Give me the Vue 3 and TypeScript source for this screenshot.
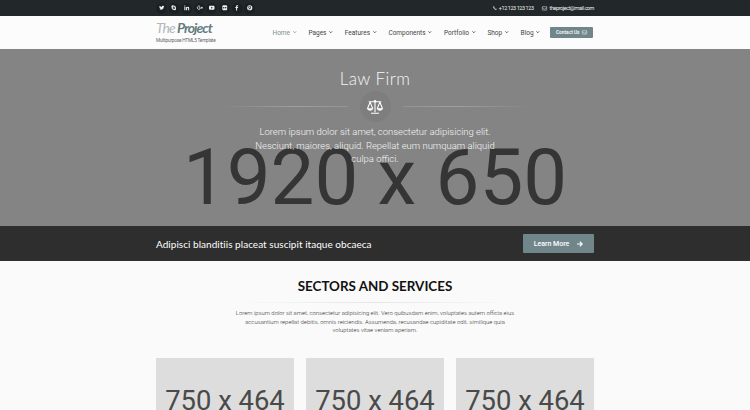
<script setup lang="ts">
interface MenuItem {
  label: string
  key: string
}

const menu: MenuItem[] = [
  { label: 'Home', key: 'home' },
  { label: 'Pages', key: 'pages' },
  { label: 'Features', key: 'features' },
  { label: 'Components', key: 'components' },
  { label: 'Portfolio', key: 'portfolio' },
  { label: 'Shop', key: 'shop' },
  { label: 'Blog', key: 'blog' },
]

const socials: string[] = ['twitter', 'skype', 'linkedin', 'google', 'youtube', 'flickr', 'facebook', 'pinterest']
const cards: number[] = [1, 2, 3]
</script>

<template>
  <div class="page">
    <div class="topbar">
      <div class="container topbar-row">
        <ul class="socials">
          <li v-for="name in socials" :key="name">
            <svg viewBox="0 0 16 16" fill="currentColor">
              <path v-if="name === 'twitter'" d="M15.5 3.4l-1.6.5 1.2-1.6-2 .8c-2.2-2-5.400-.3-5 2.600C5.500 5.600 3.300 4.400 1.500 2.300c-.9 1.700-.5 3.300.9 4.300L1 6.200c0 1.500 1 2.700 2.500 3.100H2c.4 1.300 1.600 2.100 3 2.200-1.300 1-2.900 1.400-4.500 1.200 6.200 3.500 13.400.3 13.400-7.500z" />
              <path v-else-if="name === 'skype'" fill-rule="evenodd" d="M4.500 1c1 0 1.700.3 2.300.7C11 1 15 4.800 14.300 9.200c2 3.500-2 7.300-5.200 5.200C4.700 15 1 11.200 1.700 6.800.2 4 1.700 1 4.500 1zM11 6.200C10.500 3.400 5 3.300 5 6.400c0 2.700 4.300 1.900 4.300 3.500 0 1.200-2.400 1-2.800-.4H4.700c.3 3.400 6.700 3.400 6.700.1 0-3-4.400-2.300-4.400-3.500 0-.9 1.900-.8 2.200.1z" />
              <path v-else-if="name === 'linkedin'" d="M1 5.500h3V15H1zM1 1.500h3v2.700H1zM6 5.500h3v1.300c1.700-2.400 6-1.900 6 2.200v6h-3V9.700c0-2.500-3-2.300-3 0V15H6z" />
              <g v-else-if="name === 'google'" fill="none" stroke="currentColor" stroke-width="2.300">
                <path d="M9 4.500C6 1.300 1 3.500 1 8s5.500 6.500 8 3c.6-.9.8-1.700.8-2.800H5.500M11.500 8H17M14.200 5.200v5.600" />
              </g>
              <path v-else-if="name === 'youtube'" fill-rule="evenodd" d="M2.500 2.500h11C15.500 2.500 16 4 16 8s-.5 5.500-2.500 5.500h-11C.5 13.500 0 12 0 8s.5-5.500 2.500-5.500zM6.300 5v6L11 8z" />
              <path v-else-if="name === 'flickr'" fill-rule="evenodd" d="M3 1h10l2 2v10l-2 2H3l-2-2V3zm2.200 4.800a2.200 2.200 0 100 4.400 2.200 2.200 0 000-4.400zm5.600 0a2.200 2.200 0 100 4.400 2.200 2.200 0 000-4.400z" />
              <path v-else-if="name === 'facebook'" d="M12 1H9.500C7 1 6 2.500 6 4.500V6H4v2.800h2V16h3V8.800h2.500L12 6H9V4.700c0-.7.400-1 1.200-1H12z" />
              <path v-else fill-rule="evenodd" d="M8 .5a7.500 7.500 0 100 15 7.500 7.500 0 000-15zM7.300 10L6 14.200l-1.300-.5 1.600-6.200c.6 2.200 3.700 1.500 3.700-1.200 0-2.700-4.700-2.400-4.700.5 0 .7.200 1.200.5 1.700l-.7 1C1.500 6.600 4.500 2.700 8.300 2.900c5.200.3 4.300 8.400.3 8-.7 0-1.100-.4-1.300-.9z" />
            </svg>
          </li>
        </ul>
        <div class="contacts">
          <span class="contact phone">
            <svg class="phone-icon" viewBox="0 0 16 16" fill="currentColor"><path d="M4 1l2.500 4-2 2c1 2 2.500 3.500 4.500 4.500l2-2 4 2.500c0 2-1.500 3-3 3C6 15 1 9 1 4c0-1.500 1-3 3-3z" /></svg>
            <span class="phone-text">+12 123 123 123</span>
          </span>
          <span class="contact mail">
            <svg class="mail-icon" viewBox="0 0 16 14" fill="none" stroke="currentColor" stroke-width="1.500"><path d="M1 2h14v11H1zM1 5l7 5 7-5" /></svg>
            <span class="mail-text">theproject@mail.com</span>
          </span>
        </div>
      </div>
    </div>

    <header class="header">
      <div class="container header-row">
        <div class="brand">
          <div class="logo"><span class="logo-the">The</span> <span class="logo-name">Project</span></div>
          <div class="tagline">Multipurpose HTML5 Template</div>
        </div>
        <nav class="menu">
          <a v-for="item in menu" :key="item.key" :class="['menu-item', item.key]">
            <span>{{ item.label }}</span>
            <svg class="caret" viewBox="0 0 8 6" fill="none" stroke="currentColor" stroke-width="2.200"><path d="M1 1l3 3 3-3" /></svg>
          </a>
        </nav>
        <a class="contact-button">
          <span>Contact Us</span>
          <svg class="mail-icon" viewBox="0 0 16 14" fill="none" stroke="currentColor" stroke-width="1.400"><path d="M1 2h14v11H1zM1 5l7 5 7-5" /></svg>
        </a>
      </div>
    </header>

    <section class="hero">
      <div class="hero-size">1920 x 650</div>
      <div class="hero-content">
        <h1>Law Firm</h1>
        <div class="separator">
          <span class="line"></span>
          <span class="emblem">
            <svg viewBox="0 0 20 18" fill="none" stroke="currentColor" stroke-width="1.200">
              <path d="M3 3h14M10 2v13M5.500 16h9M4.500 3.500L1.500 11M4.500 3.500L7.500 11M15.500 3.500l-3 7.500M15.500 3.500l3 7.500" />
              <path d="M1 10.500h7c-.5 3.600-6.500 3.600-7 0zM12 10.500h7c-.5 3.600-6.500 3.600-7 0z" fill="currentColor" stroke="none" />
              <circle cx="10" cy="2.500" r="1.500" fill="currentColor" stroke="none" />
            </svg>
          </span>
          <span class="line right"></span>
        </div>
        <p>
          <span>Lorem ipsum dolor sit amet, consectetur adipisicing elit.</span><br />
          <span>Nesciunt, maiores, aliquid. Repellat eum numquam aliquid</span><br />
          <span>culpa offici.</span>
        </p>
      </div>
    </section>

    <section class="band">
      <div class="container band-row">
        <h2>Adipisci blanditiis placeat suscipit itaque obcaeca</h2>
        <a class="learn">
          <span>Learn More</span>
          <svg viewBox="0 0 14 14" fill="none" stroke="currentColor" stroke-width="2.800"><path d="M0 7h11M6.500 1.500L12 7l-5.500 5.500" /></svg>
        </a>
      </div>
    </section>

    <section class="services">
      <h2>SECTORS AND SERVICES</h2>
      <div class="rule"></div>
      <p>
        <span>Lorem ipsum dolor sit amet, consectetur adipisicing elit. Vero quibusdam enim, voluptates autem officia eius</span><br />
        <span>accusantium repellat debitis, omnis reiciendis. Assumenda, recusandae cupiditate odit, similique quia</span><br />
        <span>voluptates vitae veniam aperiam.</span>
      </p>
      <div class="container cards">
        <div v-for="card in cards" :key="card" class="card">750 x 464</div>
      </div>
    </section>
  </div>
</template>

<style>
body {
  margin: 0;
  overflow: hidden;
}
</style>

<style scoped>
.page {
  width: 750px;
  height: 410px;
  overflow: hidden;
  background: #fafafa;
  font-family: Roboto, "Liberation Sans", sans-serif;
  color: #333;
}
svg {
  display: block;
  overflow: visible;
  flex: none;
}
h1, h2, p, ul {
  margin: 0;
  padding: 0;
}
p {
  white-space: nowrap;
}
.container {
  width: 438px;
  margin: 0 auto;
}
.topbar {
  height: 16px;
  background: #22282a;
  color: #f0f0f0;
}
.topbar-row {
  height: 16px;
  display: flex;
  justify-content: space-between;
  align-items: center;
}
.socials {
  display: flex;
  list-style: none;
  gap: 1.600px;
}
.socials li {
  width: 11px;
  height: 11px;
  border-radius: 50%;
  background: #1b2021;
  display: flex;
  align-items: center;
  justify-content: center;
}
.socials svg {
  width: 5.500px;
  height: 5.500px;
}
.contacts {
  display: flex;
  font-size: 5.500px;
  line-height: 16px;
  gap: 8px;
  white-space: nowrap;
}
.contact {
  display: flex;
  align-items: center;
  gap: 2px;
}
.phone-text {
  letter-spacing: -0.430px;
}
.mail-text {
  letter-spacing: -0.420px;
}
.phone-icon {
  width: 4px;
  height: 4px;
}
.mail-icon {
  width: 5px;
  height: 4.500px;
}
.mail {
  gap: 3px;
}
.header {
  height: 33px;
  background: #fcfcfc;
}
.header-row {
  height: 33px;
  display: flex;
  align-items: center;
}
.brand {
  width: 116.500px;
  height: 33px;
}
.logo {
  padding-top: 3px;
  font: italic 14px/17px "Lato", sans-serif;
  letter-spacing: -1px;
  white-space: nowrap;
}
.logo-the {
  color: #b4b9ba;
}
.logo-name {
  color: #647d80;
  font-weight: 700;
}
.tagline {
  font-size: 4.700px;
  line-height: 7px;
  padding-top: 1px;
  letter-spacing: -0.190px;
  color: #666;
  white-space: nowrap;
}
.menu {
  display: flex;
  gap: 12.400px;
  width: 277.500px;
  font-size: 6.500px;
  line-height: 10px;
  color: #444;
}
.menu-item {
  display: flex;
  align-items: center;
  gap: 2.500px;
}
.caret {
  width: 3.500px;
  height: 2.600px;
}
.home {
  color: #7b8f93;
}
.contact-button {
  width: 43px;
  height: 11px;
  border-radius: 1px;
  background: #71868a;
  color: #fff;
  display: flex;
  align-items: center;
  justify-content: center;
  gap: 2.500px;
  font-size: 4.800px;
  font-weight: 500;
  white-space: nowrap;
}
.hero {
  height: 177px;
  background: #848484;
  display: grid;
  overflow: hidden;
}
.hero-size,
.hero-content {
  grid-area: 1 / 1;
}
.hero-size {
  padding-top: 84px;
  text-align: center;
  font-size: 78px;
  line-height: 89px;
  color: #353535;
  white-space: nowrap;
}
.hero-content {
  z-index: 1;
  text-align: center;
  color: #f5f5f5;
}
h1 {
  padding-top: 19px;
  font: 300 17px/21px "Lato", sans-serif;
  letter-spacing: 0.450px;
}
.separator {
  display: flex;
  align-items: center;
  justify-content: center;
  height: 35px;
  gap: 12px;
}
.line {
  width: 128px;
  height: 1px;
  background: linear-gradient(90deg, transparent, #a0a0a0 60%, #929292);
}
.line.right {
  background: linear-gradient(270deg, transparent, #a0a0a0 60%, #929292);
}
.emblem {
  width: 31px;
  height: 31px;
  border-radius: 50%;
  background: #7e7e7e;
  display: flex;
  align-items: center;
  justify-content: center;
  color: #fff;
}
.emblem svg {
  width: 18px;
  height: 16px;
}
.hero p {
  padding-top: 1px;
  font-size: 9.480px;
  font-weight: 300;
  line-height: 13.600px;
}
.band {
  height: 35px;
  background: #2e2e2e;
  color: #fff;
}
.band-row {
  height: 35px;
  display: flex;
  align-items: center;
  justify-content: space-between;
}
.band h2 {
  font: 400 10px/14px "Lato", sans-serif;
  letter-spacing: 0.030px;
  white-space: nowrap;
}
.learn {
  width: 71px;
  height: 19px;
  border-radius: 1px;
  background: #71868a;
  display: flex;
  align-items: center;
  justify-content: center;
  gap: 8px;
  font-size: 7px;
  font-weight: 500;
}
.learn svg {
  width: 6px;
  height: 6px;
}
.services {
  text-align: center;
}
.services h2 {
  padding-top: 17px;
  font: 700 13.400px/17px "Lato", sans-serif;
  color: #111;
}
.rule {
  width: 280px;
  height: 1px;
  margin: 7px auto 6px;
  background: linear-gradient(90deg, transparent, #e6e6e6, transparent);
}
.services p {
  font-size: 5.900px;
  font-weight: 300;
  line-height: 8.700px;
  color: #333;
}
.cards {
  display: flex;
  gap: 12px;
  padding-top: 23px;
}
.card {
  flex: 1;
  height: 86px;
  padding-top: 27px;
  box-sizing: border-box;
  background: #ddd;
  color: #4a4a4a;
  font-size: 27.400px;
  line-height: 32px;
  white-space: nowrap;
}
</style>
